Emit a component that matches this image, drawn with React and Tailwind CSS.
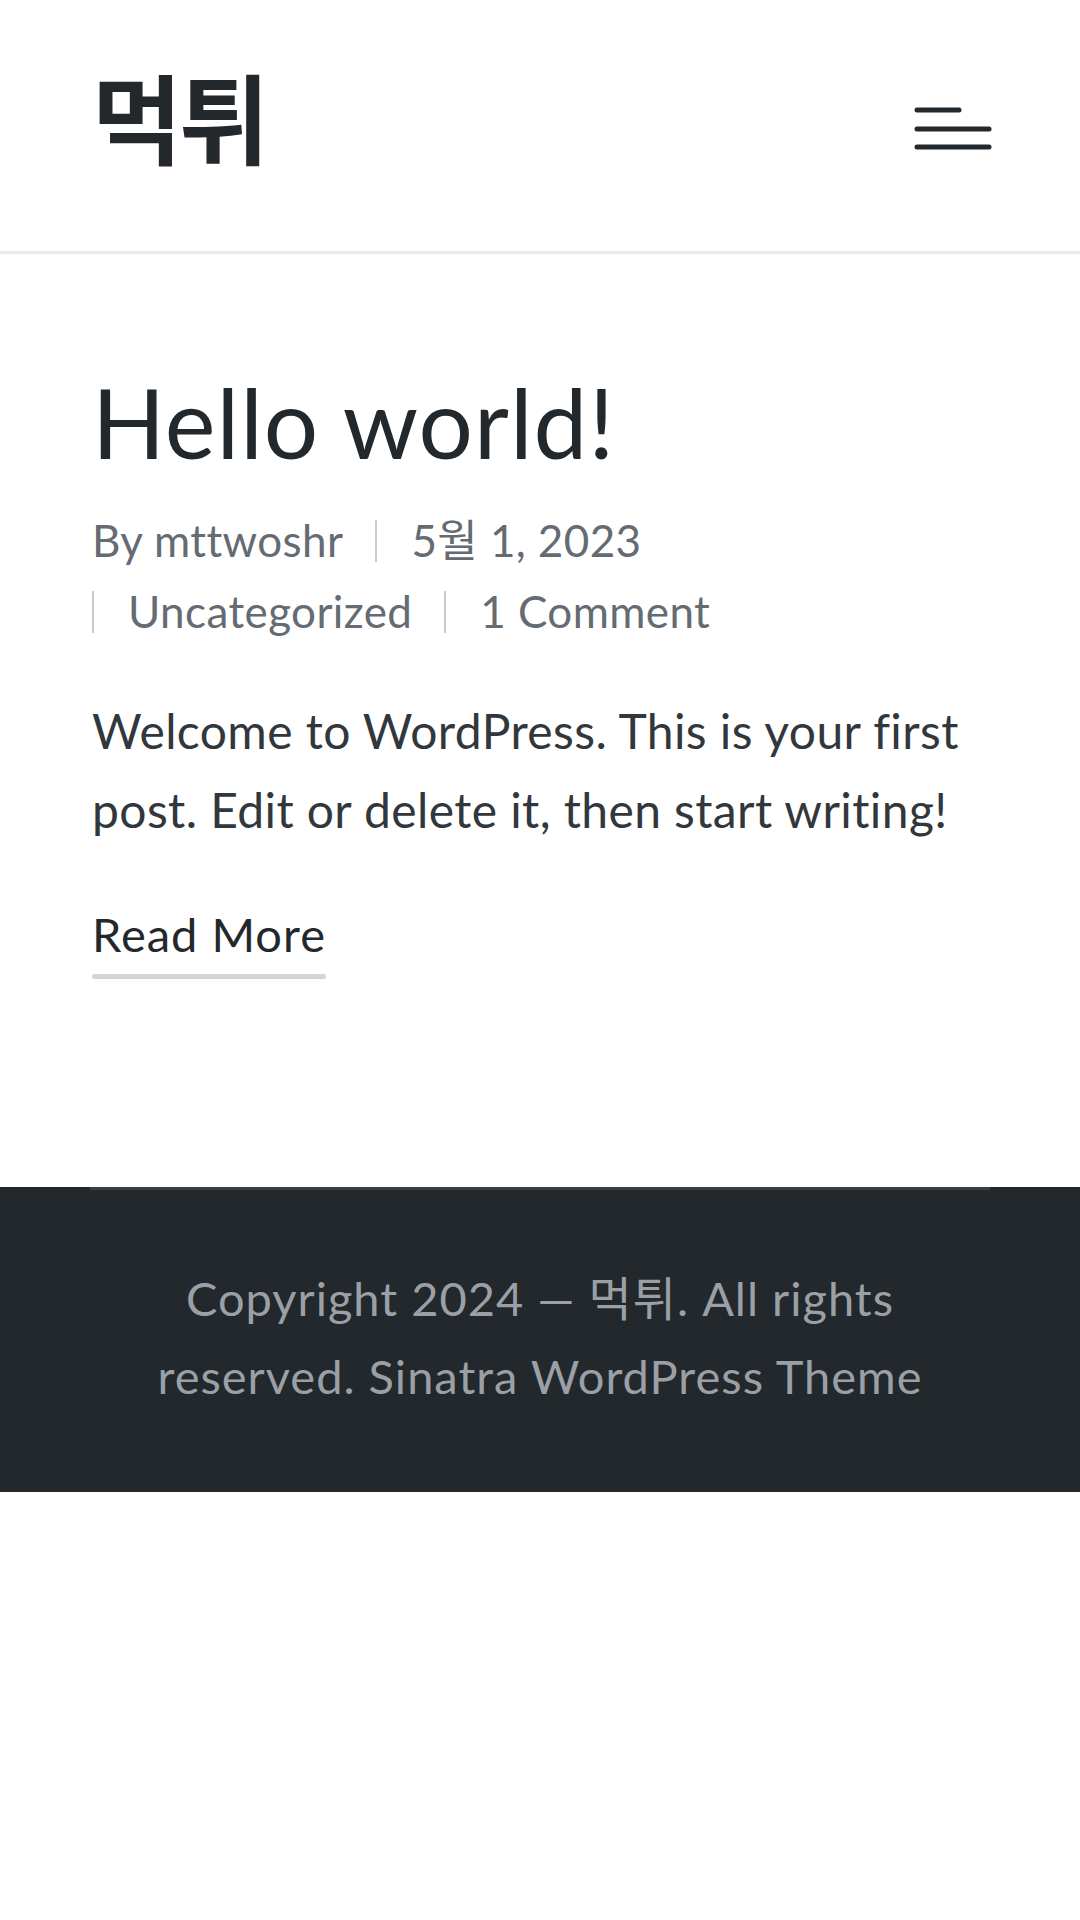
import React from 'react';

const FONT = { fontFamily: '"Lato", "Noto Sans CJK KR", sans-serif' };

function Hamburger() {
  return (
    <svg width="80" height="50" viewBox="0 0 80 50" className="block">
      <line x1="3" y1="6" x2="45" y2="6" stroke="#23282d" strokeWidth="5" strokeLinecap="round" />
      <line x1="3" y1="25" x2="75" y2="25" stroke="#23282d" strokeWidth="5" strokeLinecap="round" />
      <line x1="3" y1="43" x2="75" y2="43" stroke="#23282d" strokeWidth="5" strokeLinecap="round" />
    </svg>
  );
}

function Sep() {
  return <span className="inline-block w-[2px] h-[42px] bg-[#c9cccf] mr-[34px]" />;
}

export default function App() {
  const meta = [
    { text: 'By mttwoshr', sep: false },
    { text: '5월 1, 2023', sep: true },
    { text: 'Uncategorized', sep: true },
    { text: '1 Comment', sep: true },
  ];

  return (
    <div className="min-h-screen bg-white [font-variant-ligatures:none]" style={FONT}>
      <header className="border-b-[3px] border-[#e9e9e9]">
        <div className="mx-[92px] h-[251px] flex items-center justify-between">
          <span
            className="mb-[24px] text-[98px] font-bold leading-none text-[#23282d] tracking-[-3px]"
            style={{ fontFamily: '"Noto Sans CJK KR", sans-serif' }}
          >
            먹튀
          </span>
          <button className="mr-[-6px] mt-[6px]">
            <Hamburger />
          </button>
        </div>
      </header>

      <main className="px-[92px] pt-[110px] pb-[208px]">
        <h1 className="text-[96px] leading-[1.2] font-normal tracking-[1px] text-[#23282d]">Hello world!</h1>

        <div className="mt-[26px] flex flex-wrap text-[44px] leading-[71px] tracking-[0.4px] text-[#646b73]">
          {meta.map((m, i) => (
            <span key={i} className="flex items-center mr-[32px]">
              {m.sep && <Sep />}
              <span>{m.text}</span>
            </span>
          ))}
        </div>

        <p className="mt-[44px] text-[48px] leading-[79px] tracking-[0.4px] text-[#32373c]">
          Welcome to WordPress. This is your first post. Edit or delete it, then start writing!
        </p>

        <a href="#" className="mt-[57px] inline-flex flex-col text-[47px] leading-[1.2] tracking-[1px] text-[#23282d]">
          <span>Read More</span>
          <span className="mt-[11px] h-[5px] w-full rounded-full bg-[#d4d4d4]" />
        </a>
      </main>

      <footer className="bg-[#23282d]">
        <div className="mx-[90px] border-t-[3px] border-[#3a3f45] px-[35px] pt-[69px] pb-[77px]">
          <p className="text-center text-[47px] leading-[78px] tracking-[1px] text-[#9aa0a6]">
            Copyright 2024 — 먹튀. All rights reserved. Sinatra WordPress Theme
          </p>
        </div>
      </footer>
    </div>
  );
}
